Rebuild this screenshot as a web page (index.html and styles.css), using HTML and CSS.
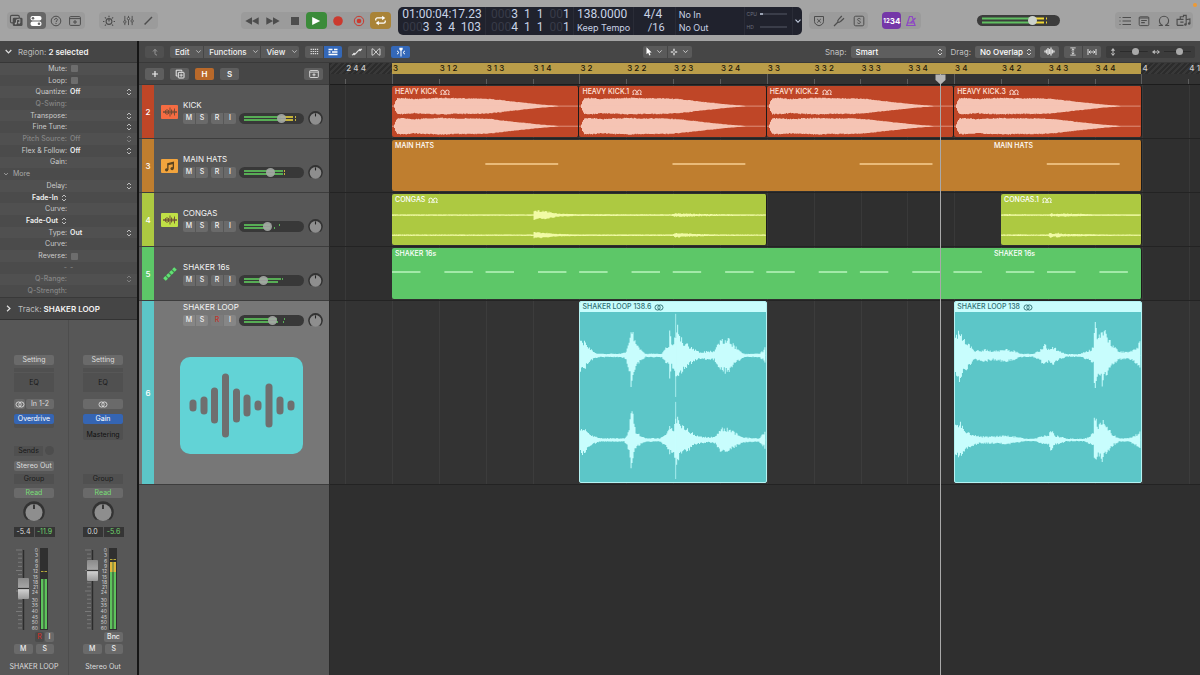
FILE: index.html
```html
<!DOCTYPE html>
<html lang="en">
<head>
<meta charset="utf-8">
<meta name="viewport" content="width=device-width, initial-scale=1">
<title>Arrange window</title>
<link rel="stylesheet" href="styles.css">
</head>
<body>
<svg class="sprite" aria-hidden="true">
  <symbol id="chev" viewBox="0 0 8 8"><path d="M1.500 2.700 4 5.300 6.500 2.700" fill="none" stroke="currentColor" stroke-width="1.100"/></symbol>
  <symbol id="updown" viewBox="0 0 6 8"><path d="M1 3 3 1l2 2M1 5l2 2 2-2" fill="none" stroke="currentColor" stroke-width=".9"/></symbol>
  <symbol id="library" viewBox="0 0 16 14"><rect x="1.500" y="1.500" width="9.500" height="8" rx="1.500" fill="none" stroke="currentColor" stroke-width="1.200"/><rect x="4" y="4" width="10.500" height="9" rx="1.500" fill="#4d4d4d"/><path d="M8 10.200V6.300l3.600-.8v4" fill="none" stroke="#aaa" stroke-width="1"/><circle cx="7.200" cy="10.200" r="1.100" fill="#aaa"/><circle cx="10.800" cy="9.500" r="1.100" fill="#aaa"/></symbol>
  <symbol id="inspector" viewBox="0 0 12 12"><rect x=".5" y="1" width="11" height="4.500" rx="2" fill="#fff"/><rect x=".5" y="6.500" width="11" height="4.500" rx="2" fill="#fff"/><circle cx="3" cy="3.200" r="1.300" fill="#666"/><circle cx="9" cy="8.700" r="1.300" fill="#666"/></symbol>
  <symbol id="help" viewBox="0 0 12 12"><circle cx="6" cy="6" r="4.800" fill="none" stroke="currentColor"/><path d="M4.600 4.900c0-2 2.900-1.900 2.800-.1C7.400 5.800 6 5.900 6 7.100M6 8v1" fill="none" stroke="currentColor"/></symbol>
  <symbol id="addbox" viewBox="0 0 12 10"><rect x=".6" y=".6" width="10.800" height="8.800" rx="1" fill="none" stroke="currentColor"/><path d="M.6 2.600h10.800M6 4v4M4 6h4" stroke="currentColor" fill="none"/></symbol>
  <symbol id="smart" viewBox="0 0 12 12"><circle cx="6" cy="6.500" r="2.900" fill="none" stroke="currentColor" stroke-width="1.100"/><path d="M6 6.500V4M6 .8v1.400M1.400 6.500H0m12 0h-1.400M1.900 2.400l1 1m7.200-1-1 1M1.900 10.600l1-1m7.200 1-1-1" stroke="currentColor" stroke-width="1.200" fill="none"/></symbol>
  <symbol id="mixer" viewBox="0 0 12 12"><path d="M2 1v10M6 1v10M10 1v10" stroke="currentColor" stroke-width="1"/><circle cx="2" cy="7.500" r="1.300" fill="#aaa" stroke="currentColor"/><circle cx="6" cy="4" r="1.300" fill="#aaa" stroke="currentColor"/><circle cx="10" cy="6.500" r="1.300" fill="#aaa" stroke="currentColor"/></symbol>
  <symbol id="pencil" viewBox="0 0 12 12"><path d="M2 10 9.800 2.200" stroke="currentColor" stroke-width="1.500"/><path d="M1.500 10.500 2 9l1 1z" fill="currentColor"/></symbol>
  <symbol id="rewind" viewBox="0 0 14 8"><path d="M7 .3v7.400L.3 4zM13.700.3v7.400L7 4z" fill="currentColor"/></symbol>
  <symbol id="forward" viewBox="0 0 14 8"><path d="M.3.3v7.400L7 4zM7 .3v7.400L13.700 4z" fill="currentColor"/></symbol>
  <symbol id="stop" viewBox="0 0 10 10"><rect x="1" y="1" width="8" height="8" fill="currentColor"/></symbol>
  <symbol id="play" viewBox="0 0 10 10"><path d="M1.200 1v8L9.200 5z" fill="currentColor"/></symbol>
  <symbol id="rec" viewBox="0 0 10 10"><circle cx="5" cy="5" r="4.800" fill="#cb392e"/></symbol>
  <symbol id="capture" viewBox="0 0 12 12"><circle cx="6" cy="6" r="4.700" fill="none" stroke="#cb392e"/><circle cx="6" cy="6" r="2.300" fill="#cb392e"/></symbol>
  <symbol id="cycle" viewBox="0 0 14 12"><path d="M1.800 6V5c0-1.200.7-1.800 1.800-1.800h6M12.200 6v1c0 1.200-.7 1.800-1.800 1.800h-6" fill="none" stroke="#fff" stroke-width="1.400"/><path d="M8.800.8v4.800l3.400-2.400zM5.200 6.400v4.800L1.800 8.800z" fill="#fff"/></symbol>
  <symbol id="shield" viewBox="0 0 12 12"><path d="M1.500 1.500h9v4.800c0 2.300-1.600 3.600-4.500 4.500-2.900-.9-4.500-2.200-4.500-4.500zM4.200 4l3.600 3.600M7.800 4 4.200 7.600" fill="none" stroke="currentColor"/></symbol>
  <symbol id="fork" viewBox="0 0 12 12"><path d="M1 11 5 7M5 7c-.8-1 0-2 .8-2.800L8.800 1M5 7c1 .8 2 0 2.800-.8L11 3.200" fill="none" stroke="currentColor" stroke-width="1.200"/></symbol>
  <symbol id="solo" viewBox="0 0 12 12"><rect x="1.200" y="1.200" width="9.600" height="9.600" rx="1.500" fill="none" stroke="currentColor"/><path d="M7.600 4.200C7 3 4.400 3.200 4.500 4.700 4.600 6.200 7.500 5.600 7.500 7.200 7.500 8.800 4.800 8.900 4.300 7.700" fill="none" stroke="currentColor" stroke-width=".9"/></symbol>
  <symbol id="metro" viewBox="0 0 12 12"><path d="M4.500 1.500h2.700l2.800 9H1.700zM2.500 8h7M5.500 8l5-5" fill="none" stroke="#8d46c4" stroke-width="1.200"/></symbol>
  <symbol id="list" viewBox="0 0 12 10"><path d="M.5 1.500h1M.5 5h1M.5 8.500h1M3.500 1.500H12M3.500 5H12M3.500 8.500H12" stroke="currentColor" stroke-width="1.100"/></symbol>
  <symbol id="notes" viewBox="0 0 12 12"><rect x="1.200" y="1.800" width="9.600" height="8.800" rx="1" fill="none" stroke="currentColor"/><path d="M1.200 3h9.600M3.200 5.500h5.600M3.200 7.700h3.600" stroke="currentColor" stroke-width="1.200"/></symbol>
  <symbol id="loop" viewBox="0 0 12 12"><path d="M.8 10.500h4C2.600 9.600 1.400 8 1.400 5.800a4.600 4.600 0 0 1 9.200 0c0 2.200-1.200 3.800-3.400 4.700h4" fill="none" stroke="currentColor" stroke-width="1.100"/></symbol>
  <symbol id="media" viewBox="0 0 14 12"><path d="M1 10.500V5h3V2.500h3V1.200h2.500V5M1 10.500h6M4 5h3M4 7.500h3" fill="none" stroke="currentColor" stroke-width="1.100"/><path d="M9.500 9.500V5.200L13 4.500v4" fill="none" stroke="currentColor"/><circle cx="8.800" cy="9.700" r="1.200" fill="currentColor"/><circle cx="12.300" cy="8.800" r="1.200" fill="currentColor"/></symbol>
  <symbol id="uparrow" viewBox="0 0 8 8"><path d="M2 3.500 4 1.300l2 2.200M4 1.500v4c0 1 .5 1.500 2 1.500" fill="none" stroke="currentColor" stroke-width="1"/></symbol>
  <symbol id="dots" viewBox="0 0 10 8"><path d="M.5 1.500h9M.5 4h9M.5 6.500h9" stroke="currentColor" stroke-width="1.300" stroke-dasharray="1.500 .9"/></symbol>
  <symbol id="blocks" viewBox="0 0 10 8"><path d="M.5 1.500h4M6 1.500h3.500M.5 4h2M4 4h5.500M.5 6.500h9" stroke="#fff" stroke-width="1.500"/></symbol>
  <symbol id="auto" viewBox="0 0 12 8"><path d="M1 7 3.500 6C6 6 6 2 9 2l2-1" fill="none" stroke="currentColor" stroke-width="1.200"/><circle cx="3.200" cy="6" r="1.300" fill="currentColor"/><circle cx="9" cy="2" r="1.300" fill="currentColor"/></symbol>
  <symbol id="flex" viewBox="0 0 10 8"><path d="M1 .8v6.400c2.500 0 2-1.900 4-3.200S6.500.8 9 .8v6.400C6.500 7.200 7 5.300 5 4S3.500.8 1 .8z" fill="none" stroke="currentColor" stroke-width=".9"/></symbol>
  <symbol id="catch" viewBox="0 0 10 10"><path d="M3.300.8h3.400v1.700L5 4 3.300 2.500z" fill="#fff"/><path d="M5 3v6.500M1 3.800l2 1.700-2 1.700M9 3.800 7 5.500l2 1.700" fill="none" stroke="#fff"/></symbol>
  <symbol id="pointer" viewBox="0 0 6 9"><path d="M.5.3v7l1.700-1.500L3.300 8.600l1.300-.5-1.200-2.700h2.300z" fill="#fff"/></symbol>
  <symbol id="plus" viewBox="0 0 8 8"><path d="M4 1v6M1 4h6" stroke="currentColor" stroke-width="1.200"/></symbol>
  <symbol id="marquee" viewBox="0 0 8 8"><path d="M4 .8v2.400M4 4.800v2.400M.8 4h2.400M4.800 4h2.400" stroke="currentColor" stroke-width="1.600"/></symbol>
  <symbol id="dup" viewBox="0 0 10 10"><path d="M2.500 7H1.200V1.200h5.600v1.300" fill="none" stroke="currentColor"/><rect x="3.300" y="3.300" width="5.700" height="5.700" rx=".6" fill="none" stroke="currentColor"/><path d="M6.150 4.500v3.400M4.500 6.150h3.400" stroke="currentColor" stroke-width=".8"/></symbol>
  <symbol id="wave" viewBox="0 0 14 10"><path d="M1 4v2M2.500 3.200v3.600M4 2v6M5.500 3v4M7 .5v9M8.500 2.500v5M10 3.500v3M11.500 1.500v7M13 4v2M0 5h14" stroke="currentColor" stroke-width=".9"/></symbol>
  <symbol id="wavebig" viewBox="0 0 11 9"><path d="M1 3.500v2M2.500 2.500v4M4 1v7M5.500 2v5M7 .5v8M8.500 2.500v4M10 3.500v2" stroke="currentColor" stroke-width="1.300"/></symbol>
  <symbol id="vzoom" viewBox="0 0 8 10"><path d="M1 1h6M1 9h6M4 2v6M2.500 3.500 4 2l1.500 1.500M2.500 6.500 4 8l1.500-1.500" fill="none" stroke="currentColor"/></symbol>
  <symbol id="hzoom" viewBox="0 0 10 8"><path d="M1 1v6M9 1v6M2 4h6M3.500 2.500 2 4l1.500 1.500M6.500 2.500 8 4 6.500 5.500" fill="none" stroke="currentColor"/></symbol>
  <symbol id="varrow" viewBox="0 0 6 8"><path d="M3 0 5.200 2.800H.8zM3 8l2.200-2.800H.8zM2.500 2h1v4h-1z" fill="currentColor"/></symbol>
  <symbol id="harrow" viewBox="0 0 8 6"><path d="M0 3 2.800.8v4.400zM8 3 5.200.8v4.400zM2 2.500h4v1H2z" fill="currentColor"/></symbol>
  <symbol id="rings" viewBox="0 0 10 7"><circle cx="3.600" cy="3.500" r="2.600" fill="none" stroke="currentColor" stroke-width=".9"/><circle cx="6.400" cy="3.500" r="2.600" fill="none" stroke="currentColor" stroke-width=".9"/></symbol>
  <symbol id="loops" viewBox="0 0 10 6"><path d="M.2 5.300h1.900C1.900 4.800.9 4.300.9 2.900a1.800 1.800 0 0 1 3.600 0c0 1.400-1 1.900-1.200 2.400h3.400C6.500 4.800 5.500 4.300 5.500 2.900a1.800 1.800 0 0 1 3.600 0c0 1.400-1 1.900-1.200 2.400h1.900" fill="none" stroke="currentColor" stroke-width=".9"/></symbol>
  <symbol id="note" viewBox="0 0 10 10"><path d="M3.500 8V2.500L8.500 1.300v5.500" fill="none" stroke="#5b4420" stroke-width="1.200"/><path d="M3.500 3.200 8.500 2" stroke="#5b4420" stroke-width="1.500"/><circle cx="2.400" cy="8" r="1.500" fill="#5b4420"/><circle cx="7.400" cy="6.900" r="1.500" fill="#5b4420"/></symbol>
  <symbol id="knob" viewBox="0 0 22 22"><path d="M4.500 18.500a10 10 0 1 1 13 0" fill="#333" stroke="#333" stroke-width="1.500"/><circle cx="11" cy="11.500" r="8.500" fill="#8e8e8e"/><path d="M11 3.500v4.500" stroke="#222" stroke-width="1.600"/></symbol>
</svg>

<header class="toolbar">
  <div class="group g-view">
    <button aria-label="Library"><svg width="15" height="13"><use href="#library"/></svg></button>
    <button class="dark" aria-label="Inspector"><svg width="12" height="12"><use href="#inspector"/></svg></button>
    <button aria-label="Help"><svg width="12" height="12"><use href="#help"/></svg></button>
    <button aria-label="Toolbar"><svg width="12" height="10"><use href="#addbox"/></svg></button>
  </div>
  <div class="group g-ctl">
    <button aria-label="Smart controls"><svg width="12" height="12"><use href="#smart"/></svg></button>
    <button aria-label="Mixer"><svg width="11" height="11"><use href="#mixer"/></svg></button>
    <button aria-label="Editors"><svg width="11" height="11"><use href="#pencil"/></svg></button>
  </div>
  <div class="group g-transport">
    <button aria-label="Rewind"><svg width="14" height="8"><use href="#rewind"/></svg></button>
    <button aria-label="Forward"><svg width="14" height="8"><use href="#forward"/></svg></button>
    <button aria-label="Stop"><svg width="10" height="10"><use href="#stop"/></svg></button>
    <button class="green" aria-label="Play"><svg width="10" height="10"><use href="#play"/></svg></button>
    <button aria-label="Record"><svg width="10" height="10"><use href="#rec"/></svg></button>
    <button aria-label="Capture recording"><svg width="12" height="12"><use href="#capture"/></svg></button>
    <button class="gold" aria-label="Cycle"><svg width="13" height="11"><use href="#cycle"/></svg></button>
  </div>
  <div class="lcd">
    <div class="c-pos"><p>01:00:04:17.23</p><p class="end"><i>000</i>3&nbsp; 3&nbsp; 4&nbsp; 103</p></div>
    <div class="c-loc"><p><i>000</i>3&nbsp; 1&nbsp; 1&nbsp; <i>00</i>1</p><p><i>000</i>4&nbsp; 1&nbsp; 1&nbsp; <i>00</i>1</p></div>
    <div class="c-tempo"><p>138.0000</p><p class="small">Keep Tempo</p></div>
    <div class="c-sig"><p>4/4</p><p class="mid end">/16</p></div>
    <div class="c-io"><p class="small">No In</p><p class="small">No Out</p></div>
    <div class="c-cpu"><p>CPU<b class="load on"></b></p><p>HD<b class="load"></b></p></div>
    <button class="c-more" aria-label="Display mode"><svg width="8" height="8"><use href="#chev"/></svg></button>
  </div>
  <div class="group g-modes">
    <button aria-label="Replace"><svg width="12" height="12"><use href="#shield"/></svg></button>
    <button aria-label="Tuner"><svg width="12" height="12"><use href="#fork"/></svg></button>
    <button aria-label="Solo"><svg width="12" height="12"><use href="#solo"/></svg></button>
  </div>
  <div class="group g-count">
    <button class="purple"><small>12</small>34</button>
    <button aria-label="Metronome"><svg width="12" height="12"><use href="#metro"/></svg></button>
  </div>
  <div class="vol master">
    <svg viewBox="0 0 83 11" width="83" height="11"><path d="M5 3.500h50M5 7.500h50" stroke="#60c062" stroke-width="2"/><path d="M55 3.500h12M55 7.500h12M69 3.500h1M69 7.500h1" stroke="#f0d735" stroke-width="2"/></svg>
    <input type="range" aria-label="Master volume" value="70">
  </div>
  <div class="group g-lists">
    <button aria-label="List editors"><svg width="12" height="10"><use href="#list"/></svg></button>
    <button aria-label="Note pads"><svg width="12" height="12"><use href="#notes"/></svg></button>
    <button aria-label="Loop browser"><svg width="12" height="12"><use href="#loop"/></svg></button>
    <button aria-label="Browsers"><svg width="15" height="13"><use href="#media"/></svg></button>
  </div>
  <span class="dot"></span>
</header>

<div class="window">
<aside class="inspector">
  <h2><svg class="tri" width="9" height="9"><use href="#chev"/></svg>Region: <b>2 selected</b></h2>
  <div class="params">
    <div><label for="mute">Mute:</label><input id="mute" type="checkbox"></div>
    <div><label for="lp">Loop:</label><input id="lp" type="checkbox"></div>
    <div><span>Quantize:</span><b>Off</b><svg><use href="#updown"/></svg></div>
    <div class="dim"><span>Q-Swing:</span></div>
    <div><span>Transpose:</span><b></b><svg><use href="#updown"/></svg></div>
    <div><span>Fine Tune:</span><b></b><svg><use href="#updown"/></svg></div>
    <div class="dim"><span>Pitch Source:</span><b>Off</b><svg><use href="#updown"/></svg></div>
    <div><span>Flex &amp; Follow:</span><b>Off</b><svg><use href="#updown"/></svg></div>
    <div><span>Gain:</span></div>
    <div class="more"><svg><use href="#chev"/></svg>More</div>
    <div><span>Delay:</span><b></b><svg><use href="#updown"/></svg></div>
    <div class="fade"><span><b>Fade-In</b><svg><use href="#updown"/></svg></span></div>
    <div><span>Curve:</span></div>
    <div class="fade"><span><b>Fade-Out</b><svg><use href="#updown"/></svg></span></div>
    <div><span>Type:</span><b>Out</b><svg><use href="#updown"/></svg></div>
    <div><span>Curve:</span></div>
    <div><label for="rev">Reverse:</label><input id="rev" type="checkbox"></div>
    <div class="dim"><span>-</span>-</div>
    <div class="dim"><span>Q-Range:</span><b></b><svg><use href="#updown"/></svg></div>
    <div class="dim"><span>Q-Strength:</span></div>
  </div>
  <h2 class="trk"><svg class="tri side" width="9" height="9"><use href="#chev"/></svg>Track: <b>SHAKER LOOP</b></h2>
  <div class="strips">
    <section class="strip">
      <button class="slot">Setting</button>
      <div class="well thin"></div>
      <div class="well eq">EQ</div>
      <div class="io"><button class="slot" aria-label="Format"><svg width="10" height="7"><use href="#rings"/></svg></button><button class="slot">In 1-2</button></div>
      <div class="fx"><button class="slot blue">Overdrive</button></div>
      <div class="out"><div class="sends"><span class="well">Sends</span><i></i></div><button class="slot">Stereo Out</button></div>
      <div class="well grp">Group</div>
      <button class="slot read">Read</button>
      <svg class="knob" width="22" height="22"><use href="#knob"/></svg>
      <div class="vals"><span>-5.4</span><span class="g">-11.9</span></div>
      <div class="fader" data-pos="40" data-level="50" data-peak="23"></div>
      <div class="ri"><button class="red">R</button><button>I</button></div>
      <div class="ms"><button>M</button><button>S</button></div>
      <p>SHAKER LOOP</p>
    </section>
    <section class="strip">
      <button class="slot">Setting</button>
      <div class="well thin"></div>
      <div class="well eq">EQ</div>
      <div class="io one"><button class="slot" aria-label="Format"><svg width="10" height="7"><use href="#rings"/></svg></button></div>
      <div class="fx tall"><button class="slot blue">Gain</button><span>Mastering</span></div>
      <div class="out"></div>
      <div class="well grp">Group</div>
      <button class="slot read">Read</button>
      <svg class="knob" width="22" height="22"><use href="#knob"/></svg>
      <div class="vals"><span>0.0</span><span class="g">-5.6</span></div>
      <div class="fader" data-pos="22" data-level="67" data-peak="11"></div>
      <div class="ri"><button>Bnc</button></div>
      <div class="ms"><button>M</button><button>S</button></div>
      <p>Stereo Out</p>
    </section>
  </div>
</aside>

<main class="arrange">
  <nav class="menubar">
    <button class="btn faint" aria-label="Up"><svg width="8" height="8"><use href="#uparrow"/></svg></button>
    <div class="seg menus"><button>Edit<svg width="7" height="7"><use href="#chev"/></svg></button><button>Functions<svg width="7" height="7"><use href="#chev"/></svg></button><button>View<svg width="7" height="7"><use href="#chev"/></svg></button></div>
    <div class="seg"><button aria-label="Grid"><svg width="9" height="7"><use href="#dots"/></svg></button><button class="blue" aria-label="Tracks"><svg width="10" height="8"><use href="#blocks"/></svg></button></div>
    <div class="seg"><button aria-label="Automation"><svg width="12" height="8"><use href="#auto"/></svg></button><button aria-label="Flex"><svg width="10" height="8"><use href="#flex"/></svg></button></div>
    <button class="btn blue" aria-label="Catch playhead"><svg width="10" height="10"><use href="#catch"/></svg></button>
    <div class="seg tools"><button aria-label="Pointer tool"><svg width="6" height="9"><use href="#pointer"/></svg><svg width="7" height="7"><use href="#chev"/></svg></button><button aria-label="Marquee tool"><svg width="8" height="8"><use href="#marquee"/></svg><svg width="7" height="7"><use href="#chev"/></svg></button></div>
    <div class="right">
      <label for="snap">Snap:</label>
      <span class="pick snap"><select id="snap"><option>Smart</option></select><svg width="6" height="8"><use href="#updown"/></svg></span>
      <label for="drag">Drag:</label>
      <span class="pick drag"><select id="drag"><option>No Overlap</option></select><svg width="6" height="8"><use href="#updown"/></svg></span>
      <button class="btn" aria-label="Waveform zoom"><svg width="11" height="9"><use href="#wavebig"/></svg></button>
      <div class="seg"><button aria-label="Fit vertically"><svg width="8" height="9"><use href="#vzoom"/></svg></button><button aria-label="Fit horizontally"><svg width="10" height="8"><use href="#hzoom"/></svg></button></div>
      <div class="zooms"><svg width="6" height="8"><use href="#varrow"/></svg><input type="range" aria-label="Vertical zoom" value="60"><svg width="8" height="6"><use href="#harrow"/></svg><input type="range" aria-label="Horizontal zoom" value="60"></div>
    </div>
  </nav>

  <div class="heads">
    <div class="headbar">
      <button class="btn" aria-label="New track"><svg width="8" height="8"><use href="#plus"/></svg></button>
      <button class="btn" aria-label="Duplicate track"><svg width="10" height="10"><use href="#dup"/></svg></button>
      <button class="btn orange">H</button>
      <button class="btn">S</button>
      <button class="btn last" aria-label="Track header options"><svg width="10" height="8"><use href="#addbox"/></svg></button>
    </div>
    <section class="track red">
      <span class="num">2</span><span class="ico"><svg width="14" height="10"><use href="#wave"/></svg></span>
      <h3>KICK</h3>
      <div class="ctl"><span class="pair"><button>M</button><button>S</button></span><span class="pair"><button>R</button><button>I</button></span>
      <div class="vol"><svg viewBox="0 0 65 11" width="65" height="11"><path d="M5 4h37M5 7h37" stroke="#62d35f" stroke-width="1.500"/><path d="M42 4h12M42 7h12M56 4h1M56 7h1" stroke="#f2dc3c" stroke-width="1.500"/></svg><input type="range" aria-label="Kick volume" value="67"></div>
      <svg class="pan" width="15" height="15"><use href="#knob"/></svg></div>
    </section>
    <section class="track orange">
      <span class="num">3</span><span class="ico"><svg width="11" height="11"><use href="#note"/></svg></span>
      <h3>MAIN HATS</h3>
      <div class="ctl"><span class="pair"><button>M</button><button>S</button></span><span class="pair"><button>R</button><button>I</button></span>
      <div class="vol"><svg viewBox="0 0 65 11" width="65" height="11"><path d="M5 4h39M5 7h39" stroke="#62d35f" stroke-width="1.500"/><path d="M45 4h1M45 7h1" stroke="#f2dc3c" stroke-width="1.500"/></svg><input type="range" aria-label="Main hats volume" value="49"></div>
      <svg class="pan" width="15" height="15"><use href="#knob"/></svg></div>
    </section>
    <section class="track lime">
      <span class="num">4</span><span class="ico"><svg width="14" height="10"><use href="#wave"/></svg></span>
      <h3>CONGAS</h3>
      <div class="ctl"><span class="pair"><button>M</button><button>S</button></span><span class="pair"><button>R</button><button>I</button></span>
      <div class="vol"><svg viewBox="0 0 65 11" width="65" height="11"><path d="M5 4h26M5 7h26M35 7h1M40 4h1" stroke="#62d35f" stroke-width="1.500"/></svg><input type="range" aria-label="Congas volume" value="43"></div>
      <svg class="pan" width="15" height="15"><use href="#knob"/></svg></div>
    </section>
    <section class="track green">
      <span class="num">5</span><span class="ico bare"><svg width="14" height="14" viewBox="0 0 14 14"><path d="M1.500 12.500 12.500 1.500" stroke="#3f8f4a" stroke-width="3"/><path d="M1.500 12.500 12.500 1.500" stroke="#62e074" stroke-width="3.600" stroke-dasharray="3 1.200"/></svg></span>
      <h3>SHAKER 16s</h3>
      <div class="ctl"><span class="pair"><button>M</button><button>S</button></span><span class="pair"><button>R</button><button>I</button></span>
      <div class="vol"><svg viewBox="0 0 65 11" width="65" height="11"><path d="M5 4h37M5 7h34M43 4h1" stroke="#62d35f" stroke-width="1.500"/></svg><input type="range" aria-label="Shaker 16s volume" value="35"></div>
      <svg class="pan" width="15" height="15"><use href="#knob"/></svg></div>
    </section>
    <section class="track teal big">
      <span class="num">6</span>
      <h3>SHAKER LOOP</h3>
      <div class="ctl"><span class="pair"><button>M</button><button>S</button></span><span class="pair"><button class="armed">R</button><button>I</button></span>
      <div class="vol"><svg viewBox="0 0 65 11" width="65" height="11"><path d="M5 4h33M5 7h34M45 4h1M44 7h1" stroke="#62d35f" stroke-width="1.500"/></svg><input type="range" aria-label="Shaker loop volume" value="51"></div>
      <svg class="pan" width="15" height="15"><use href="#knob"/></svg></div>
      <svg class="art" viewBox="0 0 123 97"><rect width="123" height="97" rx="10" fill="#62d3d6"/><path d="M13 46v5M24 43v11M34.500 34v29M45.500 20v57M56.500 35v27M67 41v15M78 47v3M89 30v37M100 43v11M111 47v3" stroke="#6f6f6f" stroke-width="7" stroke-linecap="round"/></svg>
    </section>
  </div>

  <div class="timeline">
    <div class="ruler beats"></div>
    <div class="lanes">
      <div class="gridlines beats"></div>
      <div class="lane beats">
        <article class="region kick r3"><h4>HEAVY KICK<svg><use href="#loops"/></svg></h4></article>
        <article class="region kick r7"><h4>HEAVY KICK.1<svg><use href="#loops"/></svg></h4></article>
        <article class="region kick r11"><h4>HEAVY KICK.2<svg><use href="#loops"/></svg></h4></article>
        <article class="region kick r15"><h4>HEAVY KICK.3<svg><use href="#loops"/></svg></h4></article>
      </div>
      <div class="lane beats">
        <article class="region hats full"><h4><span>MAIN HATS</span><span>MAIN HATS</span></h4>
        <svg class="notes" viewBox="0 0 750 52" preserveAspectRatio="none"><path d="M93.500 24.500h73M281 24.500h73M468.500 24.500h73M656 24.500h73" stroke="#f8ce92" stroke-width="1.500"/></svg></article>
      </div>
      <div class="lane beats">
        <article class="region congas half"><h4>CONGAS<svg><use href="#loops"/></svg></h4></article>
        <article class="region congas tail"><h4>CONGAS.1<svg><use href="#loops"/></svg></h4></article>
      </div>
      <div class="lane beats">
        <article class="region shaker full"><h4><span>SHAKER 16s</span><span>SHAKER 16s</span></h4>
        <svg class="notes" viewBox="0 0 750 52" preserveAspectRatio="none"><path d="M0 24.500h750" stroke="#b9f5bd" stroke-width="1.500" stroke-dasharray="28.500 24 28.500 12.750"/></svg></article>
      </div>
      <div class="lane beats tall">
        <article class="region sloop r7" data-wave="a"><h4>SHAKER LOOP 138.6<svg class="rings"><use href="#rings"/></svg></h4></article>
        <article class="region sloop r15" data-wave="b"><h4>SHAKER LOOP 138<svg class="rings"><use href="#rings"/></svg></h4></article>
      </div>
    </div>
    <div class="playhead"><svg width="11" height="11" viewBox="0 0 11 11"><path d="M.5.500h10v5.500L5.500 10.500.5 6z" fill="#b5b5b5"/></svg></div>
  </div>
</main>
</div>
<script src="app.js"></script>
</body>
</html>
```
FILE: styles.css
```css
:root { --row: 54px; --tall: 184px; }
* { box-sizing: border-box; }
body { margin: 0; min-height: 100vh; display: flex; flex-direction: column; background: #2f2f2f; color: #dcdcdc; font: 8px/10px Inter, "Liberation Sans", sans-serif; }
h2, h3, h4, p { margin: 0; font-size: inherit; font-weight: inherit; }
button { font: inherit; color: inherit; border: 0; padding: 0; margin: 0; background: none; display: flex; align-items: center; justify-content: center; }
svg { display: block; flex: none; }
.sprite { position: absolute; width: 0; height: 0; }

/* toolbar */
.toolbar { position: relative; height: 41px; background: #a4a4a4; color: #4d4d4d; display: flex; align-items: center; padding: 0 7px; }
.group { display: flex; height: 17px; background: #9b9b9b; border-radius: 4px; flex: none; }
.group button { flex: 1; border-radius: 4px; }
.g-view { width: 78px; margin-right: 14px; }
.g-ctl { width: 59px; margin-right: 28px; }
.g-transport { width: 150px; margin-left: auto; margin-right: 7px; }
.group .dark { background: #666; }
.group .green { background: #3b8b3a; color: #fff; }
.group .gold { background: #a98337; }
.group .purple { background: #7537a8; color: #fff; font-weight: 700; }
.purple small { font-size: 6px; }
.lcd { display: flex; width: 404px; height: 28px; background: #20222d; border-radius: 5px; color: #c9d3e6; font: 12px/13px Roboto, "Liberation Sans", sans-serif; white-space: nowrap; padding-left: 4px; margin-right: 7px; flex: none; }
.lcd > div { border-right: 1px solid #2a2c37; padding-top: 1px; }
.lcd p { height: 13px; }
.lcd i { font-style: normal; color: #383b48; }
.lcd .end { text-align: right; padding-right: 4px; }
.lcd .small { font: 9px/14px Inter, "Liberation Sans", sans-serif; }
.lcd .mid { font-size: 11px; }
.c-pos { width: 84px; }
.c-loc { width: 88px; padding-left: 5px; }
.c-tempo { width: 60px; padding-left: 3px; }
.c-sig { width: 42px; padding-left: 10px; }
.lcd .c-sig .end { padding-right: 10px; }
.c-io { width: 70px; padding-left: 3px; }
.c-cpu { width: 48px; padding-left: 1px; }
.lcd .c-cpu p { display: flex; justify-content: space-between; align-items: center; font: 5px/12px Inter, sans-serif; color: #6a6e7c; }
.load { width: 27px; height: 2px; background: #3a3d49; margin-right: 5px; }
.load.on { border-left: 3px solid #9aa2b2; }
.c-more { width: 9px; }
.g-modes { width: 59px; margin-right: 14px; }
.g-count { width: 39px; }
.g-count button:first-child { flex: none; width: 19px; }
.vol { position: relative; width: 65px; height: 11px; background: #383838; border-radius: 6px; flex: none; }
.vol input { position: absolute; inset: 0; width: 100%; height: 100%; margin: 0; appearance: none; background: none; }
.vol input::-webkit-slider-thumb { appearance: none; width: 9px; height: 9px; border-radius: 50%; background: #a5a9a5; opacity: .9; }
.vol.master { width: 83px; margin: 0 auto; background: #3c3c3c; }
.vol.master input::-webkit-slider-thumb { background: #ccd2cc; opacity: 1; }
.g-lists { width: 78px; }
.dot { position: absolute; right: 3px; top: 3px; width: 4px; height: 4px; border-radius: 50%; background: #ec9a35; }

.window { flex: 1; display: flex; min-width: 0; }

/* inspector */
.inspector { width: 139px; flex: none; border-right: 2px solid #151515; background: #575757; display: flex; flex-direction: column; }
.inspector h2 { height: 22px; display: flex; align-items: center; gap: 2px; padding-left: 4px; background: #454545; border-bottom: 1px solid #373737; color: #bbb; }
.inspector h2 b { font-weight: 600; color: #f2f2f2; }
.inspector h2.trk { height: 23px; border-top: 1px solid #393939; border-bottom: 1px solid #333; }
.tri { margin-right: 3px; color: #ddd; }
.tri.side { transform: rotate(-90deg); }
.params { height: 234px; display: grid; grid-template-rows: repeat(20, minmax(0, 1fr)); font-size: 7px; color: #ccc; background: #505050; }
.params > div { display: flex; align-items: center; padding-right: 5px; background: #4b4b4b; gap: 3px; }
.params > div:nth-child(odd) { background: #505050; }
.params span, .params label { width: 67px; text-align: right; }
.params b { font-weight: 600; color: #f0f0f0; flex: 1; }
.params svg { width: 6px; height: 8px; }
.params .dim, .params .dim b { color: #858585; font-weight: 500; }
.params .more { padding-left: 3px; color: #aaa; gap: 4px; }
.params .fade span { display: flex; align-items: center; justify-content: flex-end; gap: 3px; }
.params .fade b { flex: none; }
.params input { appearance: none; width: 7px; height: 7px; margin: 0 1px; background: #6d6d6d; border-radius: 1px; }
.strips { flex: 1; display: grid; grid-template-columns: minmax(0, 69fr) minmax(0, 68fr); font-size: 7px; }
.strip { display: flex; flex-direction: column; align-items: center; padding: 35px 0 0; border-right: 1px solid #4d4d4d; color: #ddd; }
.strip + .strip { border-right: 0; }
.strip > * { flex: none; }
.slot { width: 40px; height: 10px; background: #6a6a6a; border-radius: 2px; white-space: nowrap; }
.slot.blue { background: #3565b3; color: #fff; }
.well { width: 40px; background: #505050; color: #181818; text-align: center; }
.thin { height: 4px; margin: 3px 0 1px; }
.eq { height: 19px; line-height: 19px; margin-bottom: 7px; }
.io { display: flex; gap: 1px; width: 40px; margin-bottom: 5px; }
.io .slot:first-child { width: 11px; }
.io .slot { width: 28px; }
.io.one .slot { width: 40px; }
.fx { width: 40px; height: 14px; background: #505050; border-radius: 2px; color: #111; text-align: center; }
.fx.tall { height: 26px; }
.fx.tall span { display: block; padding-top: 6px; }
.out { height: 46px; padding-top: 18px; width: 40px; }
.tall + .out { height: 34px; }
.sends { display: flex; justify-content: space-between; margin-bottom: 5px; }
.sends .well { width: 29px; }
.sends i { width: 9px; height: 9px; border-radius: 50%; background: #4d4d4d; }
.grp { height: 10px; margin: 0 0 4px; }
.read { color: #78dd76; }
.knob { margin-top: 3px; }
.vals { display: flex; gap: 1px; margin: 4px 0 11px; }
.vals span { width: 20px; height: 10px; background: #353535; text-align: center; }
.vals .g { color: #6fd66d; }
.fader { position: relative; display: flex; width: 40px; height: 82px; }
.fader .groove { width: 17px; height: 100%; }
.fader ol { list-style: none; margin: 2px 2px 0 0; padding: 0; width: 7px; height: 78px; display: grid; grid-template-rows: repeat(8, minmax(0, 16fr)) minmax(0, 22fr) repeat(5, minmax(0, 17fr)) 0; justify-items: end; font-size: 5px; line-height: 0; color: #ccc; }
.fader .cap { position: absolute; left: 4px; width: 11px; height: 21px; border-radius: 1px; background: linear-gradient(#8a8a8a, #a5a5a5 45%, #333 47%, #333 53%, #d0d0d0 55%, #9a9a9a); }
.meter { width: 8px; height: 100%; }
.ri { display: flex; width: 40px; padding-left: 21px; margin: 2px 0; gap: 1px; }
.ri button, .ms button { flex: 1; height: 10px; background: #6a6a6a; border-radius: 2px; color: #eee; font-weight: 500; }
.ri .red { color: #c0342c; background: #4b4b4b; }
.ms { display: flex; gap: 3px; width: 40px; }
.strip p { white-space: nowrap; margin-top: 8px; }

/* arrange area */
.arrange { flex: 1; min-width: 0; display: grid; grid-template: 22px 1fr / 191px minmax(0, 1fr); background: #2f2f2f; }
.menubar { grid-column: 1 / -1; background: #464646; display: flex; align-items: center; gap: 6px; padding: 0 5px 0 6px; border-bottom: 1px solid #393939; white-space: nowrap; }
.right { display: flex; align-items: center; gap: 5px; }
.btn { width: 19px; height: 12px; background: #5e5e5e; border-radius: 2px; flex: none; font-weight: 600; }
.btn.faint { background: #505050; color: #999; }
.btn.blue { background: #3468b8; }
.btn.orange { background: #b9692a; color: #fff; }
.seg { display: flex; height: 12px; gap: 1px; border-radius: 2px; overflow: hidden; flex: none; }
.seg button { width: 18px; background: #5a5a5a; gap: 4px; }
.seg button.blue { background: #3468b8; }
.seg.menus { width: 129px; font-weight: 500; color: #f0f0f0; }
.seg.menus button { width: auto; padding: 0 1px 0 5px; flex: auto; justify-content: space-between; }
.seg.menus svg { color: #bbb; }
.seg.tools { margin-left: auto; margin-right: 127px; }
.seg.tools button { width: 24px; color: #ccc; }
.menubar label { color: #c0c0c0; margin-right: -1px; }
.pick { position: relative; flex: none; height: 12px; }
.pick svg { position: absolute; right: 3px; top: 2px; pointer-events: none; }
.pick select { appearance: none; width: 100%; height: 12px; border: 0; padding: 0 5px; border-radius: 2px; background: #5e5e5e; color: #fff; font: inherit; font-weight: 500; display: block; }
.snap { width: 95px; }
.drag { width: 60px; }
.zooms { display: flex; align-items: center; gap: 4px; width: 89px; height: 12px; padding: 0 4px; background: #3c3c3c; border-radius: 2px; color: #bbb; flex: none; }
.zooms input { appearance: none; min-width: 0; flex: 1; height: 7px; margin: 0; background: linear-gradient(#2b2b2b, #2b2b2b) center / 100% 1px no-repeat; }
.zooms input::-webkit-slider-thumb { appearance: none; width: 7px; height: 7px; border-radius: 50%; background: #aaa; }

/* track headers */
.heads { background: #575757; border-right: 1px solid #2a2a2a; }
.headbar { height: 22px; background: #464646; display: flex; align-items: center; gap: 6px; padding: 0 6px; border-bottom: 1px solid #3b3b3b; color: #eee; }
.headbar .last { margin-left: auto; }
.track { height: var(--row); display: grid; grid-template-columns: 12px 17px 1fr; grid-template-rows: 13px 12px; column-gap: 7px; align-content: center; padding: 0 6px 0 3px; border-bottom: 1px solid #3d3d3d; }
.num { grid-row: 1 / 3; align-self: stretch; margin: -14px 0; display: flex; align-items: center; justify-content: center; background: var(--c); color: #fff; font-weight: 500; }
.track.red { --c: #bf4627; --i: #f56c42; }
.track.orange { --c: #bf7e2f; --i: #f2a43d; }
.track.lime { --c: #adc941; --i: #c0e046; }
.track.green { --c: #5dc768; }
.track.teal { --c: #5cc6c8; }
.ico { grid-row: 1 / 3; grid-column: 2; width: 17px; height: 14px; margin-top: 6px; border-radius: 1px; background: var(--i); display: flex; align-items: center; justify-content: center; color: #6b4a35; }
.bare { background: none; }
.track h3 { grid-column: 3; margin-left: -2px; color: #f4f4f4; line-height: 13px; }
.ctl { grid-column: 3; margin: 0 0 0 -2px; display: flex; align-items: center; gap: 3px; }
.pair { display: flex; gap: 1px; }
.pair button { width: 12px; height: 11px; background: #6a6a6a; color: #f2f2f2; font-size: 7px; font-weight: 500; }
.pair button:first-child { border-radius: 2px 0 0 2px; }
.pair button:last-child { border-radius: 0 2px 2px 0; }
.pair .armed { color: #c3352c; }
.pan { margin-left: auto; }
.track.big { height: var(--tall); background: #777; grid-template-rows: 13px 12px 1fr; align-content: stretch; }
.big .num { grid-row: 1 / 4; margin: 0; }
.big .pair button { background: #868686; }
.big .pair .armed { background: #7c7c7c; }
.art { grid-column: 2 / 4; grid-row: 3; width: 123px; height: 97px; margin: 31px 0 0 19px; }

/* timeline: one pick-up beat, sixteen beats of bar 3, the first beat of bar 4 */
.timeline { position: relative; min-width: 0; }
.beats { display: grid; grid-template-columns: 304fr repeat(18, minmax(0, 937fr)) 230fr; }
.ruler { height: 22px; background: linear-gradient(transparent 11px, #333 11px), repeating-linear-gradient(135deg, #2c2c2c 0 2px, #383838 2px 4px); border-bottom: 1px solid #1c1c1c; grid-template-rows: 11px 10px; font-weight: 500; }
.ruler span { padding-left: 1px; white-space: nowrap; color: #ccc; grid-row: 1; }
.ruler .cyc { background: #ba9d49; color: #1a1608; }
.ruler i { grid-row: 2; border-left: 1px solid #5d5d5d; height: 5px; align-self: end; }
.ruler i.major { height: 10px; }
.lanes { position: relative; }
.gridlines { position: absolute; inset: 0; }
.gridlines i { border-left: 1px solid #393939; }
.lane { height: var(--row); padding: 1px 0; border-bottom: 1px solid #232323; position: relative; }
.lane.tall { height: var(--tall); padding: 0 0 1px; background: #ffffff05; }
.region { grid-row: 1; position: relative; min-width: 0; border-radius: 2px; border-right: 1px solid #1b1b1b; overflow: hidden; color: #fff; background: var(--c); }
.region h4 { height: 11px; line-height: 11px; display: flex; align-items: center; padding-left: 3px; font-size: 7px; font-weight: 500; white-space: nowrap; gap: 3px; position: relative; }
.region h4 svg { width: 10px; height: 6px; }
.region h4 .rings { height: 7px; }
.region .draw, .region .notes { position: absolute; inset: 0; width: 100%; height: 100%; }
.kick { --c: #bf4627; color: #ffe6df; }
.hats { --c: #bf7e2f; }
.congas { --c: #adc941; }
.shaker { --c: #5dc768; }
.sloop { --c: #5cc6c8; border: 1px solid #b4f3f3; }
.sloop h4 { height: 10px; line-height: 10px; padding-left: 2px; background: #c8fdfd; color: #2e6e72; }
.full h4 { display: grid; grid-template-columns: 600fr 147fr; gap: 0; }
.r3 { grid-column: 3 / 7; }
.r7 { grid-column: 7 / 11; }
.r11 { grid-column: 11 / 15; }
.r15 { grid-column: 15 / 19; }
.full { grid-column: 3 / 19; }
.half { grid-column: 3 / 11; }
.tail { grid-column: 16 / 19; }
.playhead { position: absolute; top: 11px; bottom: 0; left: 70%; width: 11px; background: linear-gradient(#a9a9a9, #a9a9a9) center / 1px 100% no-repeat; margin-left: -4px; }
```
FILE: app.js
```js
const NS = 'http://www.w3.org/2000/svg';
const el = (tag, parent, attrs = {}) => {
  const n = document.createElementNS(NS, tag);
  for (const k in attrs) n.setAttribute(k, attrs[k]);
  parent.appendChild(n);
  return n;
};

// Ruler labels, ticks and grid lines, one per beat
const ruler = document.querySelector('.ruler');
const lines = document.querySelector('.gridlines');
const labels = ['2 4 4'];
for (let b = 1; b <= 4; b++) for (let d = 1; d <= 4; d++) labels.push(d > 1 ? `3 ${b} ${d}` : b > 1 ? `3 ${b}` : '3');
labels.push('4', '4 1');
labels.forEach((t, i) => {
  const s = document.createElement('span');
  s.textContent = t;
  s.style.gridColumn = i + 2;
  if (i > 0 && i < 17) s.className = 'cyc';
  const k = document.createElement('i');
  k.style.gridColumn = i + 2;
  if (i % 4 === 1) k.className = 'major';
  ruler.append(s, k);
  const g = document.createElement('i');
  g.style.gridColumn = i + 2;
  lines.append(g);
});

// Waveforms: [x, half height] envelopes drawn as one-unit columns, roughened
let seed = 7;
const rnd = () => (seed = (seed * 16807) % 2147483647) / 2147483647;
const at = (env, x) => {
  for (let i = 1; i < env.length; i++) {
    if (x <= env[i][0]) {
      const [x0, y0] = env[i - 1], [x1, y1] = env[i];
      return y0 + (y1 - y0) * (x - x0) / (x1 - x0);
    }
  }
  return env[env.length - 1][1];
};
const parse = s => s.split(' ').map(p => p.split(':').map(Number));
function wave(region, w, h, color, rough, channels, spikes = []) {
  const svg = el('svg', region, { class: 'draw', viewBox: `0 0 ${w} ${h}`, preserveAspectRatio: 'none' });
  for (const [cy, text] of channels) {
    const env = parse(text), up = [], down = [];
    for (let x = env[0][0]; x < env[env.length - 1][0]; x += 1) {
      const e = at(env, x);
      const a = (cy - e * (1 - rough * rnd())).toFixed(1), b = (cy + e * (1 - rough * rnd())).toFixed(1);
      up.push(`${x} ${a}`, `${x + 1} ${a}`);
      down.unshift(`${x + 1} ${b}`, `${x} ${b}`);
    }
    el('path', svg, { d: `M${up.join('L')}L${down.join('L')}Z`, fill: color });
    el('path', svg, { d: `M0 ${cy}H${w}`, stroke: color, 'stroke-width': 1, opacity: 0.6 });
  }
  spikes.forEach(d => el('path', svg, { d, stroke: color, 'stroke-width': 1, opacity: 0.7 }));
}
const kick = '2:2 3:5 5:8.5 14:8.5 22:7.5 34:8.3 50:8.8 64:8.3 86:8.3 100:7.5 112:6 124:4.5 136:3.2 150:1.6 162:.7 167:0';
document.querySelectorAll('.kick').forEach(r => wave(r, 187, 52, '#f6c4b4', 0.1, [[20.5, kick], [41, kick]]));
const congas = document.querySelectorAll('.congas');
wave(congas[0], 375, 52, '#f1fba5', 0.4, [
  [21.5, '0:.7 141:.7 142:5 148:5 156:4 165:2 185:1 280:.8 283:2 300:1.5 325:1 375:.6'],
  [42, '0:.7 141:.7 142:3.5 150:3 165:1.5 190:.8 281:.8 284:3 292:2 310:1.2 330:.7 375:.6']]);
wave(congas[1], 140, 52, '#f1fba5', 0.4, [
  [21.5, '0:.6 3:1 38:.7 48:.8 50:2 54:1 58:1.8 75:1.5 95:.8 140:.8'],
  [42, '0:.6 20:1 28:.6 47:.8 49:3.5 52:1.5 57:2.5 62:1.5 90:1 115:.6 140:.6']]);
const shaker = {
  a: [[54, '0:17 4:16 8:10 12:5 18:2 40:2 46:4 48:14 50:19 51:32 53:30 54:18 57:12 60:7 66:2 82:2 86:9 89:11 90:27 92:14 94:18 98:32 101:20 105:15 112:9 120:4 135:5 140:15 146:19 150:18 155:11 160:6 165:2 180:2 184:5 187:10'],
      [139.5, '0:15 4:16 7:9 12:5 20:2 44:2 46:4 49:14 51:30 53:30 54:18 56:9 60:6 66:2 80:2 85:6 90:16 94:14 98:32 100:17 106:15 112:9 116:5 128:3 136:4 142:15 146:14 152:11 158:7 164:3 180:2 187:10']],
  b: [[54, '0:20 3:29 5:26 8:20 12:14 20:5 30:7 38:5 50:7 60:5 66:2 78:1.500 84:5 90:12 94:7 98:11 104:5 112:1.500 125:1.500 135:6 139:9 140:36 142:36 143:22 148:32 152:24 158:12 165:5 172:4 178:5 184:11 187:18'],
      [139.5, '0:17 5:19 10:12 16:7 24:4 35:4 50:5 60:4 70:1.500 80:1.500 86:4 94:6 97:13 100:5 106:4 112:1.500 130:1.500 136:5 139:8 140:26 142:22 144:15 148:25 152:17 158:7 165:2 175:2 182:6 187:10']]
};
const spikes = { a: ['M96.500 12V96', 'M96.500 101V179'], b: [] };
document.querySelectorAll('.sloop').forEach(r => wave(r, 187, 182, '#c8fdfd', 0.4, shaker[r.dataset.wave], spikes[r.dataset.wave]));

// Channel faders: groove with ticks, dB scale, cap, level meter
document.querySelectorAll('.fader').forEach(f => {
  const { pos, level, peak } = f.dataset;
  const g = el('svg', f, { class: 'groove', viewBox: '0 0 17 82' });
  let d = '';
  for (let i = 0; i < 20; i++) d += `M${i % 5 ? 4 : 2} ${2 + i * 4.1}H8`;
  el('path', g, { d, stroke: '#8a8a8a', 'stroke-width': 0.7 });
  el('path', g, { d: 'M9.500 2V82', stroke: '#2c2c2c', 'stroke-width': 1.4 });
  f.insertAdjacentHTML('beforeend', '<ol>' + [0, 3, 6, 9, 12, 15, 18, 21, 24, 30, 35, 40, 45, 50, 60].map(n => `<li>${n}</li>`).join('') + `</ol><span class="cap" style="top:${pos - 10}px"></span>`);
  const m = el('svg', f, { class: 'meter', viewBox: '0 0 8 82' });
  el('rect', m, { width: 8, height: 82, fill: '#303030' });
  const top = 81 - level;
  [1, 4.5].forEach(x => {
    el('rect', m, { x, y: top, width: 2.5, height: level, fill: '#5ec35c' });
    if (level > 60) el('rect', m, { x, y: top, width: 2.5, height: 10, fill: '#dfb63c' });
    el('rect', m, { x, y: peak, width: 2.5, height: 1, fill: '#b8a93a' });
  });
});
```
